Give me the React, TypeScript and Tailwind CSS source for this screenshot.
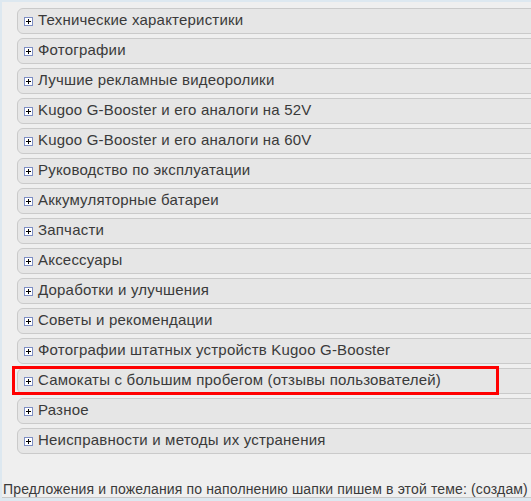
import React from "react";

const items = [
  "Технические характеристики",
  "Фотографии",
  "Лучшие рекламные видеоролики",
  "Kugoo G-Booster и его аналоги на 52V",
  "Kugoo G-Booster и его аналоги на 60V",
  "Руководство по эксплуатации",
  "Аккумуляторные батареи",
  "Запчасти",
  "Аксессуары",
  "Доработки и улучшения",
  "Советы и рекомендации",
  "Фотографии штатных устройств Kugoo G-Booster",
  "Самокаты с большим пробегом (отзывы пользователей)",
  "Разное",
  "Неисправности и методы их устранения",
];

function PlusIcon() {
  return (
    <svg width="9" height="9" viewBox="0 0 9 9" className="shrink-0">
      <rect x="0.5" y="0.5" width="8" height="8" fill="#ffffff" stroke="#7d8ec4" />
      <path d="M2 4.5H7M4.5 2V7" stroke="#000000" strokeWidth="1" />
    </svg>
  );
}

export default function App() {
  return (
    <div className="w-[531px] h-[501px] overflow-hidden bg-[#efefef] border-t-2 border-l-2 border-b-[3px] border-[#dde8f0] flex flex-col font-['Liberation_Sans',Arial,sans-serif] antialiased">
      <div className="flex flex-col gap-[4px] pt-[6px] pl-[15px]">
        {items.map((t, i) => (
          <div
            key={i}
            className="relative w-[540px] h-[26px] shrink-0 rounded-[6px] border border-[#cacaca] bg-[#e6e6e6] flex items-center pl-[6px] gap-[5px] text-[15px] text-[#3a3a3a]"
          >
            <PlusIcon />
            <span className="leading-[16px] whitespace-nowrap tracking-[0.2px] font-normal relative top-[-1px]">{t}</span>
            {i === 12 && (
              <div className="absolute left-[-6px] top-[-3px] w-[487px] h-[29px] border-[3px] border-[#ff0000] pointer-events-none" />
            )}
          </div>
        ))}
      </div>
      <div className="flex-1" />
      <div className="pl-[1px] text-[14px] leading-[16px] tracking-[0.14px] text-[#3a3a3a] whitespace-nowrap border-b border-[#c8c8c8]">
        Предложения и пожелания по наполнению шапки пишем в этой теме: (создам)
      </div>
    </div>
  );
}
